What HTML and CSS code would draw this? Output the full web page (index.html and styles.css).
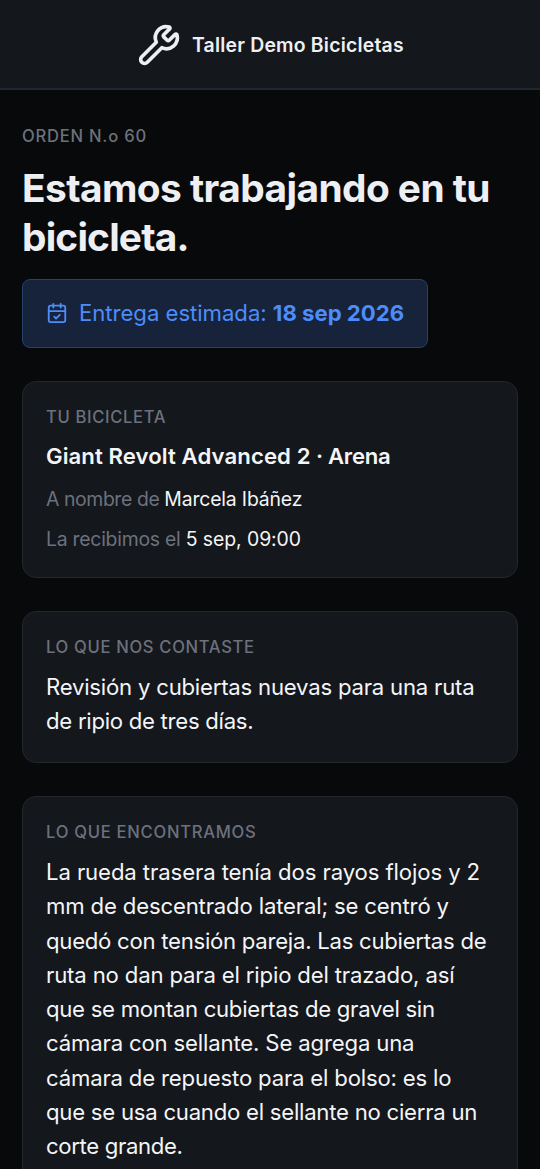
FILE: index.html
```html
<!DOCTYPE html>
<html lang="es">
<head>
<meta charset="utf-8">
<meta name="viewport" content="width=device-width, initial-scale=1">
<title>Taller Demo Bicicletas</title>
<link rel="stylesheet" href="styles.css">
</head>
<body>
<header class="topbar">
  <svg class="topbar-icon" viewBox="0 0 24 24"><path d="M14.7 6.3a1 1 0 0 0 0 1.4l1.6 1.6a1 1 0 0 0 1.4 0l3.106-3.105c.32-.322.863-.22.983.218a6 6 0 0 1-8.259 7.057l-7.91 7.91a1 1 0 0 1-2.999-3l7.91-7.91a6 6 0 0 1 7.057-8.259c.438.12.54.662.219.984z"/></svg>
  <span class="shop-name">Taller Demo Bicicletas</span>
</header>
<main class="content">
  <p class="label order">ORDEN N.o 60</p>
  <h1 class="title">Estamos trabajando en tu<br><span class="title-end">bicicleta.</span></h1>
  <div class="delivery">
    <svg class="delivery-icon" viewBox="0 0 24 24"><path d="M8 2v4M16 2v4M3 10h18M9 16l2 2 4-4"/><rect x="3" y="4" width="18" height="18" rx="2"/></svg>
    <span class="delivery-text">Entrega estimada: <strong>18 sep 2026</strong></span>
  </div>
  <section class="card bike">
    <h2 class="label l-bike">TU BICICLETA</h2>
    <p class="bike-name"><span class="model">Giant Revolt Advanced 2</span><span class="variant"> · Arena</span></p>
    <p class="detail owner">A nombre de <span class="value">Marcela Ibáñez</span></p>
    <p class="detail received">La recibimos el <span class="value">5 sep, 09:00</span></p>
  </section>
  <section class="card told">
    <h2 class="label l-told">LO QUE NOS CONTASTE</h2>
    <p class="copy"><span class="a1">Revisión y cubiertas nuevas para una ruta</span><br><span class="a2">de ripio de tres días.</span></p>
  </section>
  <section class="card found">
    <h2 class="label l-found">LO QUE ENCONTRAMOS</h2>
    <p class="copy"><span class="b1">La rueda trasera tenía dos rayos flojos y 2</span><br><span class="b2">mm de descentrado lateral; se centró y</span><br><span class="b3">quedó con tensión pareja. Las cubiertas de</span><br><span class="b4">ruta no dan para el ripio del trazado, así</span><br><span class="b5">que se montan cubiertas de gravel sin</span><br><span class="b6">cámara con sellante. Se agrega una</span><br><span class="b7">cámara de repuesto para el bolso: es lo</span><br><span class="b8">que se usa cuando el sellante no cierra un</span><br><span class="b9">corte grande.</span></p>
  </section>
</main>
</body>
</html>
```
FILE: styles.css
```css
* { box-sizing: border-box; }
html { background: #08090b; }
body { margin: 0; height: 1169px; overflow: hidden; background: #08090b; color: #f4f5f7; font-family: Inter, "Liberation Sans", sans-serif; font-feature-settings: "calt" 0; }
p, h1, h2 { margin: 0; }
svg { fill: none; stroke: currentColor; stroke-width: 2; stroke-linecap: round; stroke-linejoin: round; flex: none; }
.topbar { display: flex; align-items: center; height: 90px; padding-left: 137px; gap: 11px; background: #14171c; border-bottom: 2px solid #212630; color: #eeeff2; }
.topbar-icon { width: 44px; height: 44px; margin-top: 1px; }
.shop-name { padding-top: 1px; font-size: 19.4px; font-weight: 600; line-height: 28px; letter-spacing: 0.21px; white-space: nowrap; }
.content { padding: 34px 22px 0; white-space: nowrap; }
.label { font-size: 16.6px; font-weight: 500; line-height: 24px; color: #6c717d; }
.order { letter-spacing: 0.77px; }
.l-bike { letter-spacing: 0.65px; }
.l-told { letter-spacing: 0.67px; }
.l-found { letter-spacing: 0.72px; }
.title { margin-top: 16px; font-size: 38.8px; font-weight: 700; line-height: 48.5px; letter-spacing: -0.55px; color: #eeeff2; }
.title-end { letter-spacing: -0.8px; }
.delivery { display: flex; align-items: center; width: 406px; height: 69px; margin-top: 17.5px; padding-left: 23px; gap: 11px; background: #17233a; border: 1.4px solid #24426f; border-radius: 8px; color: #4c8dfb; font-size: 22.15px; }
.delivery-icon { width: 22px; height: 22px; }
.delivery-text { letter-spacing: -0.03px; margin-top: -1px; }
.delivery strong { font-weight: 700; letter-spacing: 0; }
.card { margin-top: 33px; padding: 23px 23px 0; background: #14171c; border: 1.4px solid #23262c; border-radius: 14px; }
.bike { height: 197px; margin-top: 33.5px; }
.told { height: 152px; }
.found { height: 420px; }
.bike-name { margin-top: 11px; font-size: 22.15px; font-weight: 600; line-height: 33px; }
.model { letter-spacing: 0.09px; }
.variant { letter-spacing: -0.25px; }
.detail { margin-top: 12px; font-size: 19.4px; line-height: 28px; color: #6c717d; }
.owner { letter-spacing: -0.4px; }
.received { letter-spacing: -0.25px; }
.value { color: #f4f5f7; letter-spacing: -0.16px; }
.received .value { letter-spacing: -0.06px; }
.copy { margin-top: 11px; font-size: 22.15px; line-height: 34.3px; }
.a1 { letter-spacing: -0.21px; }
.a2 { letter-spacing: -0.27px; }
.b1 { letter-spacing: -0.1px; }
.b2 { letter-spacing: -0.16px; }
.b3 { letter-spacing: -0.26px; }
.b4 { letter-spacing: -0.16px; }
.b5 { letter-spacing: -0.27px; }
.b6 { letter-spacing: -0.16px; }
.b7 { letter-spacing: -0.18px; }
.b8 { letter-spacing: -0.24px; }
.b9 { letter-spacing: -0.35px; }
```
